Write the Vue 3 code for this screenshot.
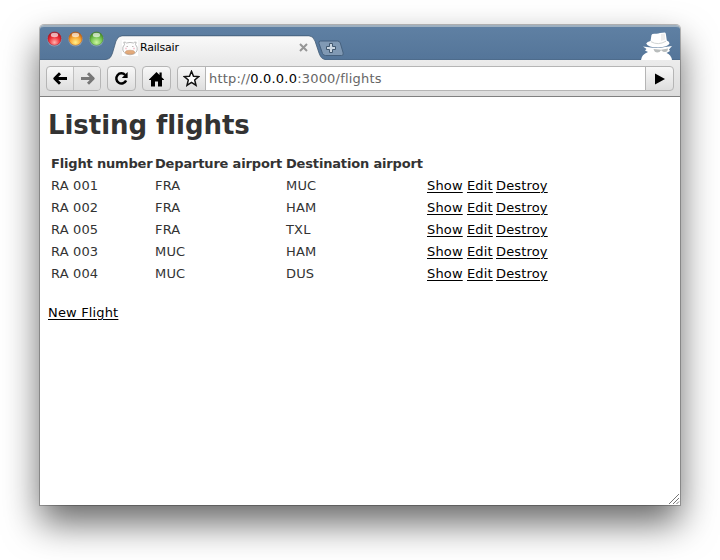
<script setup>
const lights = [
  { id: 'red', dark: '#a30d18', mid: '#f02d38', glow: '#ffb3ae' },
  { id: 'amber', dark: '#b4530b', mid: '#f9a834', glow: '#fff08a' },
  { id: 'green', dark: '#3c7d1e', mid: '#76c552', glow: '#cdf5a0' }
]
const flights = [
  { number: 'RA 001', from: 'FRA', to: 'MUC' },
  { number: 'RA 002', from: 'FRA', to: 'HAM' },
  { number: 'RA 005', from: 'FRA', to: 'TXL' },
  { number: 'RA 003', from: 'MUC', to: 'HAM' },
  { number: 'RA 004', from: 'MUC', to: 'DUS' }
]
</script>

<template>
  <main class="desktop">
    <section class="window">
      <header class="titlebar">
        <div class="lights">
          <svg v-for="l in lights" :key="l.id" width="15" height="16" viewBox="0 0 15 16">
            <defs>
              <radialGradient :id="l.id" cx=".5" cy=".78" r=".75">
                <stop offset="0" :stop-color="l.glow" />
                <stop offset=".55" :stop-color="l.mid" />
                <stop offset="1" :stop-color="l.dark" />
              </radialGradient>
            </defs>
            <circle cx="7.5" cy="8.4" r="7.2" fill="#b9cbdc" opacity=".5" />
            <circle cx="7.5" cy="7.6" r="6.7" :fill="`url(#${l.id})`" :stroke="l.dark" stroke-opacity=".5" stroke-width=".8" />
            <ellipse cx="7.5" cy="4" rx="3.7" ry="2.2" fill="#fff" opacity=".65" />
          </svg>
        </div>
        <div class="tab">
          <svg class="tab-shape" width="220" height="25" viewBox="0 0 220 25">
            <defs>
              <linearGradient id="tabfill" x1="0" y1="0" x2="0" y2="1">
                <stop offset="0" stop-color="#f9f9f9" />
                <stop offset="1" stop-color="#ebebeb" />
              </linearGradient>
            </defs>
            <path d="M0 25V24.5C4 24 5 22 6.500 18L10 6Q12 1 16 1H203Q207 1 209 6L213 18C214.500 22 216 24 219 24.500V25Z" fill="url(#tabfill)" />
            <path d="M0 24.5C4 24 5 22 6.500 18L10 6Q12 .8 16 .8H203Q207 .8 209 6L213 18C214.500 22 216 24 219 24.500" fill="none" stroke="#3f5872" stroke-width="1" opacity=".75" />
          </svg>
          <svg class="favicon" width="16" height="16" viewBox="0 0 16 16">
            <rect width="16" height="16" fill="#fff" />
            <path d="M2.500 4.500L1.800 2.200Q3.500 1.800 4.500 3Q8 1.800 11.500 3Q12.500 1.800 14.200 2.200L13.500 4.500Q15.800 7 15.200 10Q14 14.500 8 14.800Q2 14.500 .8 10Q.2 7 2.500 4.500Z" fill="#fdfdfd" stroke="#aaa" stroke-width=".8" />
            <path d="M4.500 6.500h1.500M10 6.500h1.500" stroke="#b0a5a5" stroke-width=".8" />
            <path d="M3 8.500h2M11 8.500h2" stroke="#f8cbd6" stroke-width="1.500" />
            <ellipse cx="8" cy="12.200" rx="4.800" ry="2" fill="#e3aa7a" stroke="#c08e6a" stroke-width=".5" />
          </svg>
          <span class="tab-title">Railsair</span>
          <svg class="close" width="9" height="9" viewBox="0 0 9 9"><path d="M1 1L8 8M8 1L1 8" stroke="#969696" stroke-width="2" /></svg>
        </div>
        <svg class="newtab" width="27" height="17" viewBox="0 0 27 17">
          <path d="M2.500 1H19.500Q21.500 1 22.300 3L25.200 13Q25.700 15.500 23.700 15.500H7.500Q5.500 15.500 4.500 13.500L1 3.500Q.3 1 2.500 1Z" fill="#8099b4" stroke="#46617e" />
          <path d="M11.500 3.500h3v3h3v3h-3v3h-3v-3h-3v-3h3Z" fill="#ccd7e2" stroke="#40576e" />
        </svg>
        <svg class="incognito" width="34" height="29" viewBox="0 0 34 29">
          <path d="M1 29Q1.500 23.500 8 21L5 19.500L6.500 18L3 15.500L11 16.500Q18 17.500 25 16L32 15L29 18.500L30 20L26.500 22Q31 23.500 32 29Z" fill="#fff" />
          <path d="M6.200 12.500Q7 10.500 10.500 10L11.500 4Q12 2.500 15 2.700Q18 3 20 2L25 1.500Q26 2 26 4L26.800 9.500Q29.500 10.500 29.500 12.500Q28 16 18 16.500Q8 16.500 6.200 12.500Z" fill="#fff" />
          <path d="M11 10.700Q18 14.800 26 10.200" fill="none" stroke="#d0d4d4" stroke-width="1" />
          <path d="M21 3L24.800 2.500L25.300 8.500L21 10Z" fill="#ededed" />
          <path d="M13.500 18L21 18.700L28 17.500Q27.800 21 25 21Q22.500 21 21.800 19.500H20.700Q20 21.500 17.300 21.500Q14.500 21.500 13.500 18Z" fill="#b9bdbd" />
        </svg>
      </header>

      <nav class="toolbar">
        <div class="button pair">
          <span class="half"><svg width="15" height="13" viewBox="0 0 15 13"><path d="M7 1.200L1.800 6.500L7 11.800M2 6.500H14" fill="none" stroke="#000" stroke-width="2.900" stroke-linejoin="round" /></svg></span>
          <span class="half forward"><svg width="15" height="13" viewBox="0 0 15 13"><path d="M8 1.200L13.200 6.500L8 11.800M1 6.500H13" fill="none" stroke="#777" stroke-width="2.900" stroke-linejoin="round" /></svg></span>
        </div>
        <div class="button single"><svg width="15" height="15" viewBox="0 0 15 15"><path d="M11.200 4A5.100 5.100 0 1 0 12.100 9.500" fill="none" stroke="#000" stroke-width="2.500" /><path d="M13.600 1V7H7.800Z" /></svg></div>
        <div class="button single"><svg width="15" height="16" viewBox="0 0 15 16"><path d="M0 8.500L7.500 1L10.500 4V1.500H12.700V6.200L15 8.500V9H13V15.500H9V10.500H6V15.500H2V9H0Z" /></svg></div>
        <div class="button omnibox">
          <span class="star"><svg width="17" height="17" viewBox="0 0 17 17"><path d="M8.500 1.300L10.500 6.200L15.800 6.600L11.700 10L13 15.300L8.500 12.400L4 15.300L5.300 10L1.200 6.600L6.500 6.200Z" fill="#fff" stroke="#111" stroke-width="1.500" /></svg></span>
          <span class="url">http://<b>0.0.0.0</b>:3000/flights</span>
          <span class="go"><svg width="10" height="12" viewBox="0 0 10 12"><path d="M0 .5L10 6L0 11.500Z" /></svg></span>
        </div>
      </nav>

      <article class="page">
        <h1>Listing flights</h1>
        <div class="table">
          <div class="row head"><span>Flight number</span><span>Departure airport</span><span>Destination airport</span></div>
          <div v-for="f in flights" :key="f.number" class="row">
            <span class="num">{{ f.number }}</span><span>{{ f.from }}</span><span>{{ f.to }}</span>
            <span class="links"><a class="show">Show</a><a class="edit">Edit</a><a class="destroy">Destroy</a></span>
          </div>
        </div>
        <a class="new">New Flight</a>
        <svg class="grip" width="12" height="12" viewBox="0 0 12 12"><path d="M1 11L11 1M5 11L11 5M8.500 11L11 8.500" stroke="#777" stroke-width="1" /></svg>
      </article>
    </section>
  </main>
</template>

<style>
body { margin: 0; background: #fff; }
</style>

<style scoped>
* { box-sizing: border-box; }
svg { display: block; flex: none; }
.desktop { width: 720px; height: 560px; padding: 25px 40px 0; overflow: hidden; background: #fff; }
.window { width: 640px; height: 480px; border-radius: 4px 4px 0 0; background: #fff; box-shadow: 0 0 0 1px rgba(0,0,0,.25), 0 18px 36px rgba(0,0,0,.6); }
.titlebar { height: 35px; display: flex; align-items: flex-end; border-radius: 4px 4px 0 0; border-top: 2px solid #9fb0bf; background: linear-gradient(#5f80a3, #547599); box-shadow: inset 0 -1px #4e6c8c; }
.lights { display: flex; gap: 6px; align-self: flex-start; padding: 4px 0 0 7px; width: 66px; }
.tab { width: 220px; height: 25px; position: relative; display: flex; align-items: center; padding-left: 16px; }
.tab-shape { position: absolute; left: 0; top: 0; }
.favicon { position: relative; margin-top: 0; }
.tab-title { position: relative; margin: 0 auto 0 2px; font: 11px/13px "Lucida Grande", "DejaVu Sans", sans-serif; letter-spacing: -.2px; color: #000; white-space: nowrap; }
.close { position: relative; margin: 0 18px 0 0; }
.newtab { margin: 0 0 3px -8px; }
.incognito { margin-left: auto; margin-right: 6px; }
.toolbar { height: 37px; padding: 6px 6px 0; display: flex; align-items: flex-start; gap: 6px; background: linear-gradient(#ececec, #dcdcdc); border-bottom: 1px solid #808080; }
.button { height: 25px; border: 1px solid #b5b5b5; border-radius: 4px; background: linear-gradient(#f8f8f8, #dedede); display: flex; overflow: hidden; flex: none; }
.pair { width: 55px; }
.half { flex: 1; display: flex; align-items: center; justify-content: center; }
.forward { border-left: 1px solid #c0c0c0; background: linear-gradient(#eee, #dedede); }
.single { width: 29px; align-items: center; justify-content: center; }
.omnibox { flex: 1; }
.star { width: 28px; display: flex; align-items: center; justify-content: center; border-right: 1px solid #b5b5b5; }
.url { flex: 1; background: #fff; padding-left: 3px; font: 13px/23px "DejaVu Sans", sans-serif; color: #666; white-space: nowrap; letter-spacing: .2px; }
.url b { font-weight: 400; color: #000; }
.go { width: 28px; border-left: 1px solid #b5b5b5; display: flex; align-items: center; justify-content: center; }
.page { height: 408px; position: relative; padding: 8px 8px 0; color: #333; font: 13px/18px Verdana, "DejaVu Sans", sans-serif; letter-spacing: .16px; }
h1 { margin: 0; padding-top: 3px; height: 46px; font-size: 26px; line-height: 34px; font-weight: 700; letter-spacing: -.06px; white-space: nowrap; }
.table { padding: 2px 0 0 3px; }
.row { display: grid; grid-template-columns: 104px 131px 141px 150px; height: 22px; line-height: 22px; white-space: nowrap; }
.head { font-weight: 700; letter-spacing: -.17px; }
.links { display: flex; gap: 4px; }
a { color: #000; text-decoration: underline; text-underline-offset: 2px; }
.show { width: 36px; }
.edit { width: 25px; }
.new { display: inline-block; margin-top: 19px; line-height: 18px; }
.grip { position: absolute; right: 0; bottom: 0; }
</style>
